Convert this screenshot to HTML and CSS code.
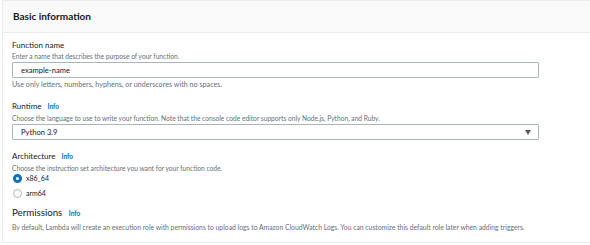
FILE: index.html
```html
<!DOCTYPE html>
<html>
<head>
    <title>Basic information</title>
    <link rel="stylesheet" href="styles.css">
</head>
<body>
    <div class="panel">
        <div class="panel-header">Basic information</div>
        <div class="panel-body">
            <div class="field">
                <div class="label">Function name</div>
                <div class="desc">Enter a name that describes the purpose of your function.</div>
                <div class="input">example-name</div>
                <div class="hint">Use only letters, numbers, hyphens, or underscores with no spaces.</div>
            </div>
            <div class="field">
                <div class="label">Runtime <a class="info">Info</a></div>
                <div class="desc">Choose the language to use to write your function. Note that the console code editor supports only Node.js, Python, and Ruby.</div>
                <div class="input select">
                    <span>Python 3.9</span>
                    <svg width="6" height="5" viewBox="0 0 6 5"><path d="M0 0h6L3 5z" fill="#545b64"/></svg>
                </div>
            </div>
            <div class="field">
                <div class="label">Architecture <a class="info">Info</a></div>
                <div class="desc">Choose the instruction set architecture you want for your function code.</div>
                <div class="radios">
                    <div class="radio"><span class="dot checked"></span>x86_64</div>
                    <div class="radio"><span class="dot"></span>arm64</div>
                </div>
            </div>
            <div class="section">
                <div class="title">Permissions <a class="info">Info</a></div>
                <div class="desc wide">By default, Lambda will create an execution role with permissions to upload logs to Amazon CloudWatch Logs. You can customize this default role later when adding triggers.</div>
            </div>
        </div>
    </div>
</body>
</html>
```

FILE: styles.css
```css
body, html {
    margin: 0;
    padding: 0;
    background-color: #ffffff;
    font-family: Lato, "Liberation Sans", sans-serif;
    color: #16191f;
}
.panel {
    margin-left: 2px;
    height: 243px;
    border: 1px solid #eaeded;
    border-right: none;
    box-sizing: border-box;
}
.panel-header {
    height: 32px;
    box-sizing: border-box;
    padding: 8px 0 0 10px;
    background-color: #fafafa;
    border-bottom: 1px solid #eaeded;
    font-size: 10px;
    line-height: 14px;
    font-weight: bold;
}
.panel-body {
    padding: 6px 0 0 9px;
    display: flex;
    flex-direction: column;
}
.field {
    width: 527px;
    margin-bottom: 10px;
}
.label {
    font-size: 8px;
    line-height: 12px;
}
.info {
    color: #0073bb;
    font-weight: bold;
    font-size: 6.5px;
    margin-left: 4px;
}
.desc, .hint {
    font-size: 6.65px;
    line-height: 10px;
    color: #687078;
}
.hint {
    margin-top: 2px;
    font-size: 7.2px;
}
.input {
    margin-top: 1px;
    height: 16px;
    box-sizing: border-box;
    border: 1px solid #aab7b8;
    border-radius: 1px;
    padding: 0 7px 0 8px;
    font-size: 7.6px;
    display: flex;
    align-items: center;
    justify-content: space-between;
}
.radios {
    display: flex;
    flex-direction: column;
    gap: 4px;
}
.radio {
    display: flex;
    align-items: center;
    gap: 4px;
    font-size: 7px;
    line-height: 11px;
    padding-left: 1px;
}
.dot {
    width: 9px;
    height: 9px;
    box-sizing: border-box;
    border-radius: 50%;
    border: 1px solid #aab7b8;
}
.dot.checked {
    border: 3px solid #0073bb;
}
.section {
    margin-top: -5px;
}
.title {
    font-size: 9.7px;
    line-height: 16px;
}
.desc.wide {
    font-size: 6.8px;
}
```
